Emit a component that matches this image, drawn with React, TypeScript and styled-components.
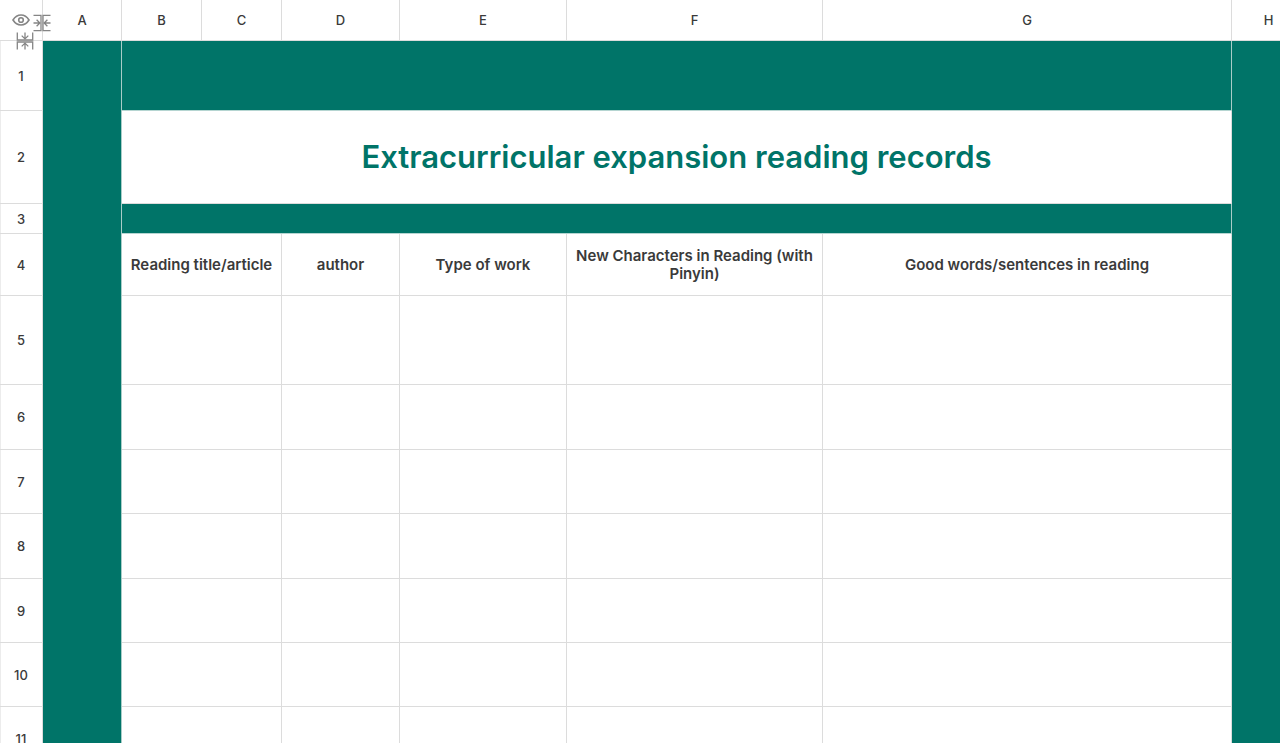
import React from "react";
import styled, { createGlobalStyle, css } from "styled-components";

const GREEN = "#007468";
const LINE = "#dcdcdc";

const GlobalStyle = createGlobalStyle`
  * { box-sizing: border-box; }
  body {
    margin: 0;
    background: #fff;
    color: #3a3a3a;
    font-family: Inter, "Liberation Sans", sans-serif;
  }
`;

const Viewport = styled.main`
  position: relative;
  height: 100vh;
  overflow: hidden;
`;

const Sheet = styled.table`
  width: calc(100% + 26px);
  table-layout: fixed;
  border-collapse: separate;
  border-spacing: 0;
`;

const Column = styled.col<{ $width?: number }>`
  width: ${({ $width }) => ($width ? `${$width}px` : "auto")};
`;

const Row = styled.tr<{ $height: number }>`
  height: ${({ $height }) => $height}px;
`;

const headingText = css`
  padding: 0;
  border-right: 1px solid ${LINE};
  border-bottom: 1px solid ${LINE};
  font-size: 13px;
  font-weight: 500;
  line-height: 16px;
  text-align: center;
  vertical-align: middle;
`;

const ColumnHeading = styled.th`
  ${headingText}
`;

const RowHeading = styled.th`
  ${headingText}
  box-shadow: inset 1px 0 #ececec;
`;

const Corner = styled.td`
  padding: 0;
  border-right: 1px solid ${LINE};
  border-bottom: 1px solid ${LINE};
`;

const Margin = styled.td`
  padding: 0;
  background: ${GREEN};
  border-right: 1px solid #a9cdc8;
`;

const Band = styled.td`
  padding: 0;
  background: ${GREEN};
  border-right: 1px solid #a9cdc8;
  border-bottom: 1px solid #b5d5d1;
`;

const Cell = styled.td`
  padding: 0 8px;
  border-right: 1px solid ${LINE};
  border-bottom: 1px solid ${LINE};
`;

const Title = styled.h1`
  margin: 0;
  color: ${GREEN};
  font-size: 31px;
  font-weight: 600;
  line-height: 40px;
  text-align: center;
`;

const FieldHeading = styled.th`
  padding: 0 8px;
  border-right: 1px solid ${LINE};
  border-bottom: 1px solid ${LINE};
  font-size: 15px;
  font-weight: 600;
  line-height: 18px;
  text-align: center;
  vertical-align: middle;
`;

const Tool = styled.button<{ $left: number; $top: number }>`
  position: absolute;
  left: ${({ $left }) => $left}px;
  top: ${({ $top }) => $top}px;
  display: flex;
  padding: 0;
  border: 0;
  background: none;
  color: #858585;
  cursor: pointer;
`;

const EyeIcon = () => (
  <svg width="18" height="14" viewBox="0 0 18 14" fill="none" stroke="currentColor" strokeWidth="1.6">
    <path d="M1 7C3 3.800 5.700 2 9 2s6 1.800 8 5C15 10.200 12.300 12 9 12S3 10.200 1 7Z" />
    <circle cx="9" cy="7" r="2.300" />
  </svg>
);

const SqueezeIcon = ({ vertical = false }: { vertical?: boolean }) => (
  <svg width="18" height="18" viewBox="0 0 18 18" fill="none" stroke="currentColor" strokeWidth="1.300">
    <g transform={vertical ? "rotate(90 9 9)" : undefined}>
      <path d="M0.500 1.300H8V16.700H0.500M17.500 1.300H10V16.700H17.500" />
      <path d="M0.500 9H6.700M3.600 5.700L6.900 9L3.600 12.300M17.500 9H11.300M14.400 5.700L11.100 9L14.400 12.300" />
    </g>
  </svg>
);

const columns = [
  { name: "A", width: 79 },
  { name: "B", width: 80 },
  { name: "C", width: 80 },
  { name: "D", width: 118 },
  { name: "E", width: 167 },
  { name: "F", width: 256 },
  { name: "G" },
  { name: "H", width: 74 },
];

const emptyRows = [
  { number: 5, height: 89 },
  { number: 6, height: 65 },
  { number: 7, height: 64 },
  { number: 8, height: 65 },
  { number: 9, height: 64 },
  { number: 10, height: 64 },
  { number: 11, height: 65 },
];

type SheetRowProps = { number: number; height: number; children: React.ReactNode };

const SheetRow = ({ number, height, children }: SheetRowProps) => (
  <Row $height={height}>
    <RowHeading scope="row">{number}</RowHeading>
    <Margin />
    {children}
    <Margin />
  </Row>
);

export default function App() {
  return (
    <>
      <GlobalStyle />
      <Viewport>
        <Sheet>
          <colgroup>
            <Column $width={43} />
            {columns.map((column) => (
              <Column key={column.name} $width={column.width} />
            ))}
          </colgroup>
          <thead>
            <Row $height={41}>
              <Corner />
              {columns.map((column) => (
                <ColumnHeading key={column.name} scope="col">
                  {column.name}
                </ColumnHeading>
              ))}
            </Row>
          </thead>
          <tbody>
            <SheetRow number={1} height={70}>
              <Band colSpan={6} />
            </SheetRow>
            <SheetRow number={2} height={93}>
              <Cell colSpan={6}>
                <Title>Extracurricular expansion reading records</Title>
              </Cell>
            </SheetRow>
            <SheetRow number={3} height={30}>
              <Band colSpan={6} />
            </SheetRow>
            <SheetRow number={4} height={62}>
              <FieldHeading colSpan={2}>Reading title/article</FieldHeading>
              <FieldHeading>author</FieldHeading>
              <FieldHeading>Type of work</FieldHeading>
              <FieldHeading>New Characters in Reading (with Pinyin)</FieldHeading>
              <FieldHeading>Good words/sentences in reading</FieldHeading>
            </SheetRow>
            {emptyRows.map(({ number, height }) => (
              <SheetRow key={number} number={number} height={height}>
                <Cell colSpan={2} />
                <Cell />
                <Cell />
                <Cell />
                <Cell />
              </SheetRow>
            ))}
          </tbody>
        </Sheet>
        <Tool type="button" aria-label="Show hidden cells" $left={12} $top={13}>
          <EyeIcon />
        </Tool>
        <Tool type="button" aria-label="Collapse columns" $left={33} $top={14}>
          <SqueezeIcon />
        </Tool>
        <Tool type="button" aria-label="Collapse rows" $left={16} $top={32}>
          <SqueezeIcon vertical />
        </Tool>
      </Viewport>
    </>
  );
}
